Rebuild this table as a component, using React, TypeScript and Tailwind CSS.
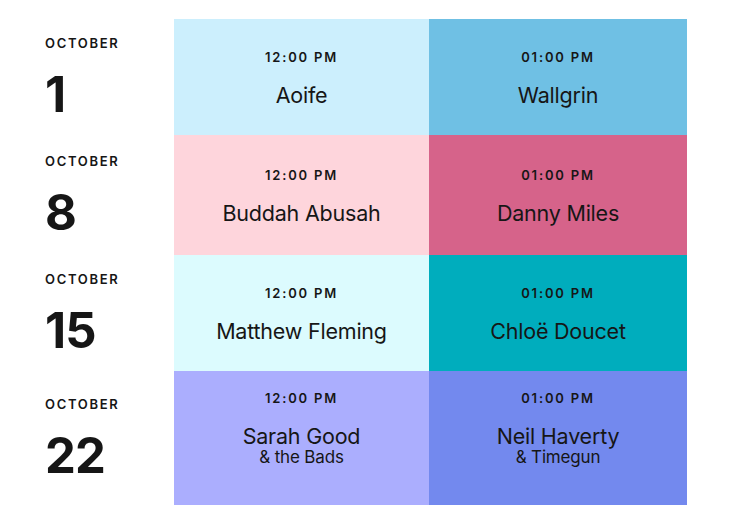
const font = { fontFamily: "Inter, 'Noto Sans', sans-serif" }

type Slot = { time: string; name: string; sub?: string; bg: string }
type Day = { day: string; height: string; pad: string; slots: Slot[] }

const days: Day[] = [
  {
    day: "1",
    height: "h-[116px]",
    pad: "pb-[2px]",
    slots: [
      { time: "12:00 PM", name: "Aoife", bg: "bg-[#cceffd]" },
      { time: "01:00 PM", name: "Wallgrin", bg: "bg-[#6fc0e4]" },
    ],
  },
  {
    day: "8",
    height: "h-[120px]",
    pad: "pb-[2px]",
    slots: [
      { time: "12:00 PM", name: "Buddah Abusah", bg: "bg-[#fed5dc]" },
      { time: "01:00 PM", name: "Danny Miles", bg: "bg-[#d6638a]" },
    ],
  },
  {
    day: "15",
    height: "h-[116px]",
    pad: "pb-[2px]",
    slots: [
      { time: "12:00 PM", name: "Matthew Fleming", bg: "bg-[#dcfbfe]" },
      { time: "01:00 PM", name: "Chloë Doucet", bg: "bg-[#00adbd]" },
    ],
  },
  {
    day: "22",
    height: "h-[134px]",
    pad: "pb-[23px]",
    slots: [
      { time: "12:00 PM", name: "Sarah Good", sub: "& the Bads", bg: "bg-[#abaefe]" },
      { time: "01:00 PM", name: "Neil Haverty", sub: "& Timegun", bg: "bg-[#7389ee]" },
    ],
  },
]

export default function App() {
  return (
    <main className="min-h-[521px] w-[729px] bg-white pt-[19px] text-[#161616]" style={font}>
      {days.map((d) => (
        <div key={d.day} className={`flex ${d.height}`}>
          {/* date */}
          <div className="flex w-[174px] flex-col justify-center pb-[2px] pl-[45px]">
            <span className="text-[13px] font-semibold leading-[18px] tracking-[0.13em]">OCTOBER</span>
            <span className="mt-[19px] text-[49px] font-bold leading-[48px] tracking-[-0.02em]">{d.day}</span>
          </div>
          {/* slots */}
          <div className="grid grid-cols-[255px_258px]">
            {d.slots.map((s) => (
              <div key={s.time} className={`flex flex-col items-center justify-center ${s.bg} ${d.pad}`}>
                <span className="text-[13px] font-semibold leading-[20px] tracking-[0.14em]">{s.time}</span>
                <span className="mt-[17px] text-[21.5px] leading-[22px] tracking-[-0.01em]">{s.name}</span>
                {s.sub && <span className="mt-[2px] text-[17px] leading-[16px] tracking-[-0.01em]">{s.sub}</span>}
              </div>
            ))}
          </div>
        </div>
      ))}
    </main>
  )
}
